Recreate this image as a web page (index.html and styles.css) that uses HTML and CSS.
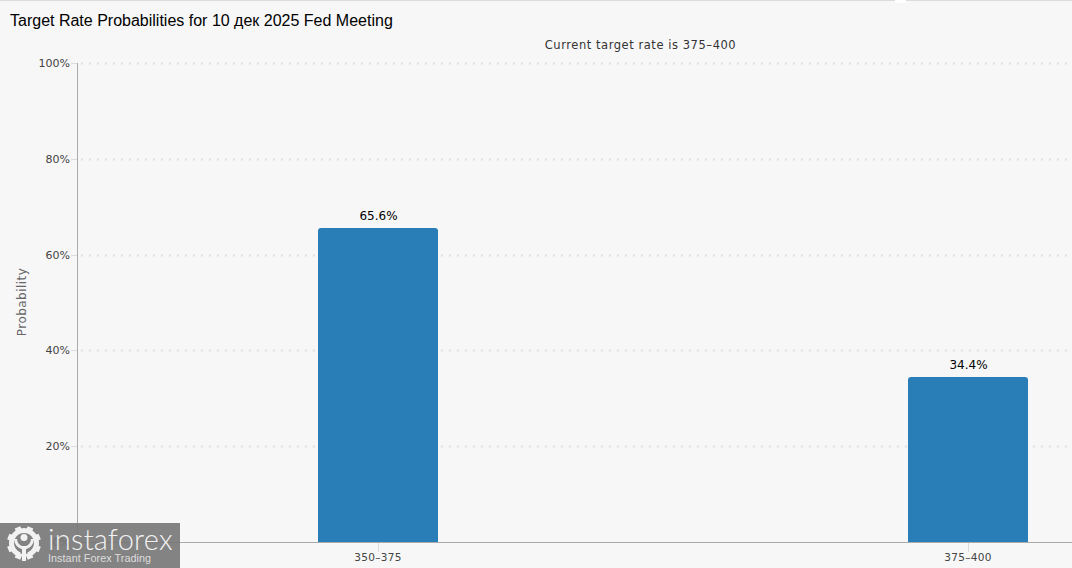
FILE: index.html
```html
<!DOCTYPE html>
<html lang="ru">
<head>
<meta charset="utf-8">
<title>Target Rate Probabilities</title>
<link rel="stylesheet" href="styles.css">
</head>
<body>
<div class="page">
  <div class="topline"><span class="gap"></span></div>
  <h1 class="title">Target Rate Probabilities for 10 дек 2025 Fed Meeting</h1>
  <svg class="chart" width="1072" height="568" viewBox="0 0 1072 568">
    <text class="subtitle" x="640.5" y="49" text-anchor="middle">Current target rate is 375–400</text>
    <g class="grid">
      <line x1="81" x2="1072" y1="63.5" y2="63.5"/>
      <line x1="81" x2="1072" y1="159.5" y2="159.5"/>
      <line x1="81" x2="1072" y1="255.5" y2="255.5"/>
      <line x1="81" x2="1072" y1="350.5" y2="350.5"/>
      <line x1="81" x2="1072" y1="446.5" y2="446.5"/>
    </g>
    <g class="ticks">
      <line x1="71" x2="77" y1="63.5" y2="63.5"/>
      <line x1="71" x2="77" y1="159.5" y2="159.5"/>
      <line x1="71" x2="77" y1="255.5" y2="255.5"/>
      <line x1="71" x2="77" y1="350.5" y2="350.5"/>
      <line x1="71" x2="77" y1="446.5" y2="446.5"/>
      <line x1="378.5" x2="378.5" y1="543" y2="552"/>
      <line x1="968.5" x2="968.5" y1="543" y2="552"/>
    </g>
    <g class="ylabels">
      <text x="70" y="67" text-anchor="end">100%</text>
      <text x="70" y="163" text-anchor="end">80%</text>
      <text x="70" y="259" text-anchor="end">60%</text>
      <text x="70" y="354" text-anchor="end">40%</text>
      <text x="70" y="450" text-anchor="end">20%</text>
      <text x="70" y="546" text-anchor="end">0%</text>
    </g>
    <text class="ytitle" transform="translate(26 302) rotate(-90)" text-anchor="middle">Probability</text>
    <path class="bar" d="M318 542V231a3 3 0 0 1 3-3H435a3 3 0 0 1 3 3V542Z"/>
    <path class="bar" d="M908 542V380a3 3 0 0 1 3-3H1025a3 3 0 0 1 3 3V542Z"/>
    <line class="axis" x1="77.5" x2="77.5" y1="63" y2="543"/>
    <line class="axis" x1="77" x2="1072" y1="542.5" y2="542.5"/>
    <text class="value" x="378.5" y="220" text-anchor="middle">65.6%</text>
    <text class="value" x="968.5" y="369" text-anchor="middle">34.4%</text>
    <text class="xlabel" x="378" y="561" text-anchor="middle">350–375</text>
    <text class="xlabel" x="968" y="561" text-anchor="middle">375–400</text>
  </svg>
  <div class="logo">
    <svg class="gear" width="36" height="36" viewBox="0 0 36 36">
      <path class="gear-ring" d="M13.720 28.750A12.500 12.500 0 1 1 22.280 28.750"/>
      <g class="gear-fill">
        <rect x="15" y="0" width="6" height="6" transform="rotate(22.500 18 17)"/>
        <rect x="15" y="0" width="6" height="6" transform="rotate(67.500 18 17)"/>
        <rect x="15" y="0" width="6" height="6" transform="rotate(112.500 18 17)"/>
        <rect x="15" y="0" width="6" height="6" transform="rotate(157.500 18 17)"/>
        <rect x="15" y="0" width="6" height="6" transform="rotate(202.500 18 17)"/>
        <rect x="15" y="0" width="6" height="6" transform="rotate(247.500 18 17)"/>
        <rect x="15" y="0" width="6" height="6" transform="rotate(292.500 18 17)"/>
        <rect x="15" y="0" width="6" height="6" transform="rotate(337.500 18 17)"/>
        <circle cx="18" cy="11.500" r="3.500"/>
        <rect x="16" y="20" width="4" height="15"/>
      </g>
      <path class="gear-arm" d="M9.500 13Q10 20 17 22M26.500 13Q26 20 19 22"/>
    </svg>
    <div class="logo-text">
      <span class="brand">instaforex</span>
      <span class="tagline">Instant Forex Trading</span>
    </div>
  </div>
</div>
</body>
</html>
```
FILE: styles.css
```css
html, body {
  margin: 0;
  padding: 0;
  background: #f7f7f7;
}
.page {
  position: relative;
  width: 1072px;
  height: 568px;
  overflow: hidden;
  background: #f7f7f7;
}
.topline {
  height: 1px;
  background: #dcdcdc;
  display: flex;
  padding-left: 895px;
}
.gap {
  width: 11px;
  height: 3px;
  background: #ffffff;
}
.title {
  margin: 0;
  padding: 10px 0 0 10px;
  font: 400 16px/20px "Liberation Sans", Arial, sans-serif;
  color: #000000;
}
.chart {
  position: absolute;
  left: 0;
  top: 0;
  font-family: "DejaVu Sans", Verdana, sans-serif;
}
.subtitle {
  font-size: 11.500px;
  letter-spacing: 0.550px;
  fill: #333333;
}
.grid line {
  stroke: #e0e0e0;
  stroke-width: 2;
  stroke-dasharray: 2 6;
}
.ticks line {
  stroke: #dcdcdc;
  stroke-width: 1;
}
.ylabels text {
  font-size: 11px;
  fill: #444444;
}
.ytitle {
  font-size: 12px;
  letter-spacing: 0.450px;
  fill: #666666;
}
.bar {
  fill: #2a7eb8;
}
.axis {
  stroke: #aaaaaa;
  stroke-width: 1;
}
.value {
  font-size: 12px;
  fill: #000000;
}
.xlabel {
  font-size: 10.500px;
  letter-spacing: 0.300px;
  fill: #444444;
}
.logo {
  position: absolute;
  left: 0;
  bottom: 0;
  width: 180px;
  height: 45px;
  background: rgba(118, 118, 118, 0.9);
  display: flex;
  align-items: flex-start;
  gap: 6px;
  padding: 3px 0 0 6px;
  box-sizing: border-box;
}
.gear-ring {
  fill: none;
  stroke: #f2f2f2;
  stroke-width: 5;
}
.gear-fill {
  fill: #f2f2f2;
}
.gear-arm {
  fill: none;
  stroke: #f2f2f2;
  stroke-width: 3;
}
.logo-text {
  display: flex;
  flex-direction: column;
  padding-top: 1px;
}
.brand {
  font: 300 29px/24px Lato, "Open Sans", sans-serif;
  letter-spacing: 0.300px;
  color: #f2f2f2;
}
.tagline {
  margin-top: 1px;
  font: 400 10.800px/13px "Liberation Sans", Arial, sans-serif;
  letter-spacing: 0.050px;
  color: #dddddd;
}
```
